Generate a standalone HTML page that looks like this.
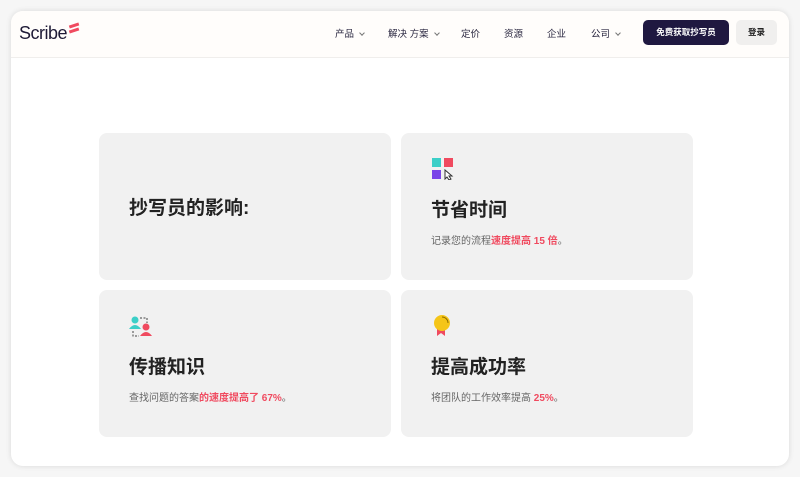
<!DOCTYPE html>
<html><head><meta charset="utf-8"><style>
*{margin:0;padding:0;box-sizing:border-box}
body{width:800px;height:477px;background:#f6f6f6;font-family:"Liberation Sans","Noto Sans CJK SC",sans-serif;position:relative;overflow:hidden}
.frame{position:absolute;left:11px;top:11px;width:778px;height:455px;background:#fff;border-radius:12px;box-shadow:0 0 6px rgba(0,0,0,.12);overflow:hidden}
.nav{position:absolute;left:0;top:0;width:100%;height:47px;background:#fffdfb;border-bottom:1px solid #f0eeec}
.logo{position:absolute;left:8px;top:12px;font-size:18px;color:#1e1a36;font-weight:500;letter-spacing:-.5px}
.logo i{position:absolute;left:50px;top:1px;width:10px;height:2.5px;background:#f04a5f;transform:rotate(-18deg)}
.nv{position:absolute;top:15px;font-size:9.5px;color:#2a2740}
.cv{display:inline-block;width:4px;height:4px;border-right:1px solid #777;border-bottom:1px solid #777;transform:rotate(45deg);margin-left:6px;position:relative;top:-2px}
.btn{position:absolute;left:632px;top:9px;width:86px;height:25px;background:#1f1840;color:#fff;border-radius:5px;font-size:8.5px;font-weight:bold;text-align:center;line-height:25px}
.btn2{position:absolute;left:725px;top:9px;width:41px;height:25px;background:#f0efee;color:#222;border-radius:5px;font-size:8.5px;font-weight:bold;text-align:center;line-height:25px}
.card{position:absolute;width:292px;height:147px;background:#f1f1f1;border-radius:8px}
.h{position:absolute;left:30px;font-size:19px;font-weight:bold;color:#222}
.p{position:absolute;left:30px;font-size:10px;color:#666}
.p b{color:#f04a5f;font-weight:bold}
</style></head><body>
<div class="frame">
<div class="nav">
<div class="logo">Scribe<i></i><i style="top:6px"></i></div>
<div class="nv" style="left:324px">产品<span class="cv"></span></div>
<div class="nv" style="left:377px">解决 方案<span class="cv"></span></div>
<div class="nv" style="left:450px">定价</div>
<div class="nv" style="left:493px">资源</div>
<div class="nv" style="left:536px">企业</div>
<div class="nv" style="left:580px">公司<span class="cv"></span></div>
<div class="btn">免费获取抄写员</div>
<div class="btn2">登录</div>
</div>
</div>
<div class="card" style="left:99px;top:133px"><div class="h" style="top:60px">抄写员的影响:</div></div>
<div class="card" style="left:401px;top:133px">
<svg style="position:absolute;left:31px;top:25px" width="24" height="22"><rect x="0" y="0" width="9" height="9" fill="#3ccfc8"/><rect x="12" y="0" width="9" height="9" fill="#f04a5f"/><rect x="0" y="12" width="9" height="9" fill="#7a44e8"/><path d="M13 12 L13 21 L15 19 L17 22 L19 21 L17 18 L20 18 Z" fill="#fff" stroke="#333" stroke-width="1"/></svg>
<div class="h" style="top:62px">节省时间</div>
<div class="p" style="top:99px">记录您的流程<b>速度提高 15 倍</b>。</div></div>
<div class="card" style="left:99px;top:290px">
<svg style="position:absolute;left:29px;top:25px" width="26" height="22"><circle cx="7" cy="5" r="3.5" fill="#3ccfc8"/><path d="M1 14 Q7 6 13 14 Z" fill="#3ccfc8"/><circle cx="18" cy="12" r="3.5" fill="#f04a5f"/><path d="M12 21 Q18 13 24 21 Z" fill="#f04a5f"/><path d="M12 3 H19 V8 M5 16 V21 H11" stroke="#444" stroke-width="1" stroke-dasharray="2 1.5" fill="none"/></svg>
<div class="h" style="top:62px">传播知识</div>
<div class="p" style="top:99px">查找问题的答案<b>的速度提高了 67%</b>。</div></div>
<div class="card" style="left:401px;top:290px">
<svg style="position:absolute;left:32px;top:24px" width="20" height="24"><path d="M4 12 L4 22 L8 19 L12 22 L12 12 Z" fill="#f04a5f"/><circle cx="9" cy="9" r="8" fill="#f5c518"/><path d="M9 3 A6 6 0 0 1 15 9" stroke="#8a6a00" stroke-width="1" fill="none"/></svg>
<div class="h" style="top:62px">提高成功率</div>
<div class="p" style="top:99px">将团队的工作效率提高 <b>25%</b>。</div></div>
</body></html>
